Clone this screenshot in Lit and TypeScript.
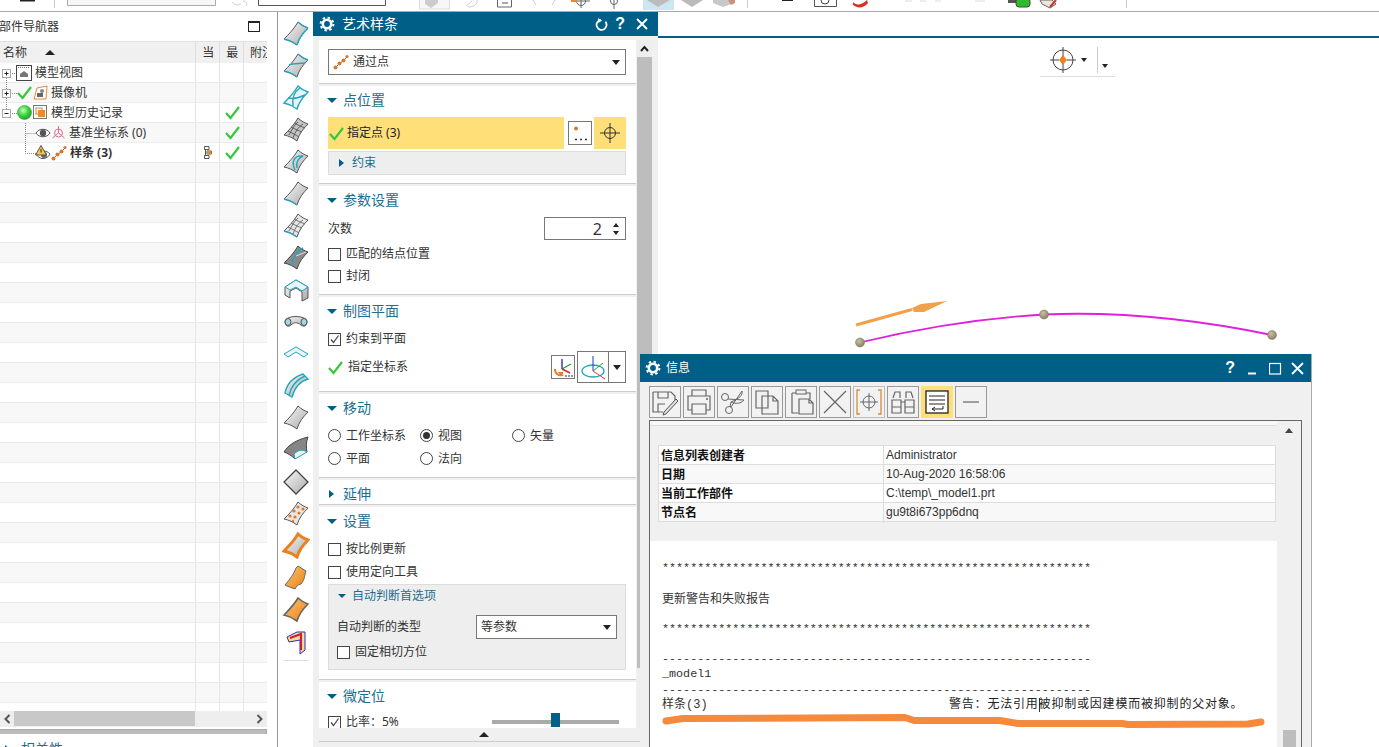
import { LitElement, html, css, svg } from 'lit';
import { customElement } from 'lit/decorators.js';

const PATCH = 'M2 20C7 15 12 10 16 3C19 6 23 8 26 9C21 14 17 19 15 26C11 23 7 21 2 20Z';
const TOP = 'M16 3C19 6 23 8 26 9';
const RIGHT = 'M26 9C21 14 17 19 15 26';
const BOTTOM = 'M15 26C11 23 7 21 2 20';
const GRID = 'M6 16C10 18 14 20 17 22M9 12C13 14 17 16 20 17M12 8C16 10 20 12 23 13M7 20C10 15 12 10 16 7M11 23C13 17 16 12 21 9';

const base = (fill = 'url(#gy)', stroke = '#555', width = 1) =>
  svg`<path d=${PATCH} fill=${fill} stroke=${stroke} stroke-width=${width} />`;
const cyan = (d: string) => svg`<path d=${d} fill="none" stroke="#22a5bd" stroke-width="1.4" />`;

// vertical strip beside the navigator, top to bottom
const stripIcons = [
  svg`${base()}${cyan(TOP)}${cyan(RIGHT)}${cyan(BOTTOM)}`,
  svg`${base()}${cyan(TOP)}${cyan(BOTTOM)}${cyan('M7 14C12 12 18 13 23 12')}`,
  svg`${base('#e6f5f8', '#22a5bd', 1.4)}${cyan('M6 15C11 16 17 15 23 12M11 23C10 16 12 9 18 5')}`,
  svg`${base('#c4c4c4', '#555')}<path d=${GRID} fill="none" stroke="#555" stroke-width=".9" />`,
  svg`${base()}${cyan('M13 23C9 15 12 8 21 9C16 11 14 15 15 21')}`,
  svg`${base()}${cyan(BOTTOM)}`,
  svg`${base('#e6e6e6', '#555')}<path d=${GRID} fill="none" stroke="#666" stroke-width=".9" />${cyan(BOTTOM)}`,
  svg`${base('#8a8a8a', '#444')}<path d="M9 23C11 15 15 8 21 5" stroke="#22a5bd" stroke-width="1.4" fill="none" /><path d="M14 13L24 9" stroke="#ddd" />`,
  svg`<path d="M3 12L14 5L26 12V23L20 26V17L14 13L8 16V23L3 20Z" fill="url(#gy)" stroke="#555" /><path d="M3 12L14 5L26 12L20 16L14 12L8 15Z" fill="#e8f6f9" stroke="#22a5bd" />`,
  svg`<path d="M3 14C4 8 24 8 25 14C25 20 21 20 19 18C15 15 12 15 9 18C7 20 3 20 3 14Z" fill="url(#gy)" stroke="#555" /><ellipse cx="6" cy="15" rx="3" ry="3.5" fill="#a8d4de" stroke="#555" /><ellipse cx="22" cy="15" rx="3" ry="3.5" fill="#a8d4de" stroke="#555" />`,
  svg`<path d="M2 15L14 8L26 15L22 18L14 13L6 18Z" fill="#e8f6f9" stroke="#22a5bd" />`,
  svg`<path d="M3 22C5 12 12 6 21 3L26 8C18 10 13 16 10 26Z" fill="url(#gy)" stroke="#22a5bd" stroke-width="1.4" />${cyan('M7 24C9 15 14 9 23 5')}`,
  svg`${base()}`,
  svg`<path d="M2 17C6 10 14 5 26 2C24 7 24 12 25 17C19 16 15 19 13 24C9 20 5 18 2 17Z" fill="#858585" stroke="#444" /><path d="M12 19C16 15 20 14 25 17L13 24Z" fill="#eee" stroke="#22a5bd" />`,
  svg`<path d="M14 3L26 15L14 27L2 15Z" fill="url(#gy)" stroke="#444" stroke-width="1.3" />`,
  svg`${base('#e6e6e6')}<g fill="#df7a2a"><circle cx="16" cy="8" r="1.6" /><circle cx="21" cy="10" r="1.6" /><circle cx="12" cy="12" r="1.6" /><circle cx="17" cy="14" r="1.6" /><circle cx="8" cy="17" r="1.6" /><circle cx="13" cy="18" r="1.6" /><circle cx="11" cy="22" r="1.2" /></g>`,
  svg`<path d=${PATCH} fill="url(#gy)" stroke="#e8811f" stroke-width="3" />`,
  svg`<path d="M3 22C8 16 12 11 14 5L16 3L24 8C22 14 23 16 19 21C16 21 14 24 13 26L5 23Z" fill="url(#or)" stroke="#666" />`,
  svg`${base('url(#or)', '#666', 1.6)}`,
  svg`<path d="M5 10L15 5H23V23L18 27V13L7 15Z" fill="#ffd79b" stroke="#2b2bc0" /><path d="M8 11L19 7V23" fill="none" stroke="#c81e3c" stroke-width="2" />`,
];

// info window toolbar
const toolIcons = [
  svg`<path d="M4 6H22L26 10V14M4 6V26H14M9 6V12H19V6M9 26V18H16" fill="none" stroke="#666" stroke-width="1.2" /><path d="M15 26L27 13L29 15L17 28L14 29Z" fill="#ddd" stroke="#555" />`,
  svg`<path d="M9 10V4H23V10M9 24H5V10H27V24H23M9 18H23V28H9Z" fill="none" stroke="#666" stroke-width="1.2" /><circle cx="24" cy="13" r="1" fill="#666" />`,
  svg`<circle cx="8" cy="11" r="3.5" fill="none" stroke="#666" /><circle cx="12" cy="24" r="3.5" fill="none" stroke="#666" /><path d="M11 13L27 14C24 18 18 18 14 16L13 21M14 21L25 5C26 9 22 13 14 16" fill="none" stroke="#666" />`,
  svg`<path d="M5 5H17V22H5ZM11 10H22L27 15V28H11ZM22 10V15H27" fill="#f0f0f0" stroke="#666" stroke-width="1.2" />`,
  svg`<path d="M7 7H25V13M7 7V27H13" fill="none" stroke="#666" stroke-width="1.2" /><rect x="11" y="4" width="10" height="4" fill="#f0f0f0" stroke="#666" /><path d="M14 13H24L28 17V28H14ZM24 13V17H28" fill="#f0f0f0" stroke="#666" stroke-width="1.2" />`,
  svg`<path d="M5 5L27 27M27 5L5 27" stroke="#666" stroke-width="1.2" />`,
  svg`<path d="M7 4H4V28H7M25 4H28V28H25" fill="none" stroke="#d98a3a" stroke-width="1.3" /><circle cx="16" cy="16" r="6" fill="none" stroke="#666" /><path d="M16 7V25M7 16H25" stroke="#666" />`,
  svg`<path d="M6 12L8 6H13V12M19 12V6H24L26 12M5 14H14V27H5ZM18 14H27V27H18ZM14 16H18M5 21H14M18 21H27" fill="none" stroke="#666" stroke-width="1.2" />`,
  svg`<rect x="5" y="5" width="22" height="22" fill="#fff" stroke="#222" stroke-width="1.3" /><path d="M8 10H24M8 14H24M8 18H24M12 23H22V20" fill="none" stroke="#222" /><path d="M14 21L11 23L14 25" fill="none" stroke="#222" />`,
  svg`<path d="M8 16H24" stroke="#666" stroke-width="1.2" />`,
];

const check = (w = 15) => html`<svg class="ic" width=${w} height=${w} viewBox="0 0 15 15"><path d="M1 8L5.5 13L14 2" fill="none" stroke="#37c83f" stroke-width="2.2" /></svg>`;
const gear = html`<svg class="ic" width="16" height="16" viewBox="0 0 16 16"><circle cx="8" cy="8" r="4.2" fill="none" stroke="#fff" stroke-width="2.6" /><circle cx="8" cy="8" r="6.4" fill="none" stroke="#fff" stroke-width="2" stroke-dasharray="2.4 2.6" /></svg>`;
const splineIcon = html`<svg class="ic" width="16" height="16" viewBox="0 0 16 16"><path d="M2 14L6 10L10 7L15 2" stroke="#8a6a4a" fill="none" /><g fill="#d9782d"><circle cx="2.5" cy="13.5" r="2" /><circle cx="6.5" cy="9.5" r="2" /><circle cx="10.5" cy="6.5" r="2" /><circle cx="14" cy="2.5" r="1.6" /></g></svg>`;
const eye = html`<svg class="ic" width="16" height="12" viewBox="0 0 16 12"><path d="M1 6C4 1 12 1 15 6C12 11 4 11 1 6Z" fill="#fff" stroke="#555" /><circle cx="8" cy="6" r="3.2" fill="#555" /></svg>`;

const treeRows = [
  {
    pad: 16, label: '模型视图', gap: 3,
    icons: html`<svg class="ic" width="16" height="16" viewBox="0 0 16 16"><rect x=".5" y=".5" width="15" height="15" fill="#fff" stroke="#444" /><path d="M2 2.5H14" stroke="#777" stroke-dasharray="1 1" /><path d="M4 9L8 6L12 9V12H4Z" fill="#777" /></svg>`,
  },
  {
    pad: 17, label: '摄像机', gap: 3,
    icons: html`${check()}<svg class="ic" width="15" height="15" viewBox="0 0 15 15" style="margin-left:1px"><path d="M1 14L4 3L14 1L13 14Z" fill="#fff" stroke="#e08a3c" /><path d="M4 8H10V12H4Z" fill="#666" /><circle cx="9" cy="6" r="2" fill="#888" /></svg>`,
  },
  {
    pad: 17, label: '模型历史记录', gap: 3,
    icons: html`<svg class="ic" width="15" height="15" viewBox="0 0 15 15"><circle cx="7.5" cy="7.5" r="7" fill="url(#ball)" stroke="#3a9a3a" stroke-width=".6" /></svg><svg class="ic" width="15" height="15" viewBox="0 0 15 15" style="margin-left:1px"><rect x=".5" y=".5" width="13" height="13" fill="#fff" stroke="#777" /><rect x="3" y="3" width="6" height="6" fill="#fff" stroke="#c98a4a" /><rect x="5" y="5" width="7" height="7" fill="#ee8a2c" /></svg>`,
  },
  {
    pad: 35, label: '基准坐标系 (0)', gap: 3,
    icons: html`${eye}<svg class="ic" width="15" height="15" viewBox="0 0 15 15"><circle cx="7.5" cy="8" r="4" fill="none" stroke="#d9708a" /><path d="M7.5 1V8M7.5 8L1.5 13M7.5 8L13.5 13" stroke="#d9708a" fill="none" /></svg>`,
  },
  {
    pad: 35, label: '样条 (3)', gap: 3, bold: true, tag: true,
    icons: html`<svg class="ic" width="16" height="16" viewBox="0 0 16 16"><path d="M1 9C4 5 12 5 15 9C12 15 4 15 1 9Z" fill="#fff" stroke="#555" /><circle cx="9" cy="10" r="3" fill="#666" /><path d="M6 0.5L11.5 10H0.5Z" fill="#f6c640" stroke="#555" /><path d="M6 4V7.5" stroke="#333" /></svg>${splineIcon}`,
  },
];

const logLines = [
  '*************************************************************',
  ' ',
  '@更新警告和失败报告',
  ' ',
  '*************************************************************',
  ' ',
  '-------------------------------------------------------------',
  '_model1',
  '-------------------------------------------------------------',
];

const infoRows = [
  ['信息列表创建者', 'Administrator'],
  ['日期', '10-Aug-2020 16:58:06'],
  ['当前工作部件', 'C:\\temp\\_model1.prt'],
  ['节点名', 'gu9t8i673pp6dnq'],
];

@customElement('app-root')
export class AppRoot extends LitElement {
  static styles = css`
    :host {
      display: block;
      position: relative;
      width: 1379px;
      height: 747px;
      overflow: hidden;
      background: #fff;
      color: #333;
      font: 12px/16px "Noto Sans", "Noto Sans CJK SC", sans-serif;
    }
    .ic { display: block; flex: none; }
    .defs { position: absolute; width: 0; height: 0; }

    .topbar { display: block; height: 11px; border-bottom: 1px solid #aaa; }
    .main { display: flex; height: 735px; }

    /* navigator */
    .nav { width: 277px; flex: none; border-right: 1px solid #999; overflow: hidden; }
    .nav-title { display: flex; align-items: center; justify-content: space-between; height: 29px; width: 261px; margin-left: -1px; }
    .nav-max { width: 10px; height: 8px; border: 1px solid #222; border-top-width: 2px; }
    .nav-table { width: 267px; }
    .thead { display: flex; height: 22px; background: #f0f0f0; border-top: 1px solid #e2e2e2; box-sizing: border-box; align-items: center; }
    .thead .name { width: 196px; padding-left: 3px; box-sizing: border-box; display: flex; align-items: center; gap: 18px; }
    .sort { width: 0; height: 0; border: 5px solid transparent; border-top: 0; border-bottom: 5px solid #222; }
    .thead .col { width: 24px; height: 100%; border-left: 1px solid #ddd; box-sizing: border-box; padding: 3px 0 0 6px; overflow: hidden; white-space: nowrap; }
    .tbody { position: relative; height: 648px; overflow: hidden; }
    .tr { display: flex; height: 20px; box-sizing: border-box; border-bottom: 1px solid #ececec; }
    .tr:nth-child(even) { background: #f8f8f8; }
    .tr .name { width: 196px; display: flex; align-items: center; box-sizing: border-box; white-space: nowrap; }
    .tr .col { width: 24px; box-sizing: border-box; border-left: 1px solid #e6e6e6; padding-left: 1px; display: flex; align-items: center; justify-content: center; }
    .tr b { font-weight: 700; }
    .tree-lines { position: absolute; left: 0; top: 0; }
    .hbar { display: flex; align-items: center; justify-content: space-between; height: 16px; background: #eee; padding: 0 4px; position: relative; }
    .hthumb { position: absolute; left: 14px; width: 181px; top: 0; height: 15px; background: #c8c8c8; }
    .hbar-left { position: relative; }
    .grip { height: 4px; margin-top: 2px; background: #bbb; border: 1px solid #aaa; border-width: 1px 1px 0 0; }
    .foot { display: flex; align-items: center; gap: 11px; padding: 7px 0 0 5px; color: #1d6f8f; font-size: 14px; }

    .tri-r { width: 0; height: 0; border: 4px solid transparent; border-right: 0; border-left: 5px solid #005f87; flex: none; }
    .tri-d { width: 0; height: 0; border: 4px solid transparent; border-bottom: 0; border-top: 5px solid #222; flex: none; }

    /* feature strip */
    .strip { width: 35px; flex: none; padding-top: 5px; box-sizing: border-box; display: flex; flex-direction: column; align-items: center; }
    .strip-item { height: 32px; display: flex; align-items: center; justify-content: center; }
    .strip hr { width: 26px; margin: 3px 0 0; border: 0; border-top: 1px solid #ddd; }

    /* dialog */
    .dialog { width: 345px; flex: none; display: flex; flex-direction: column; background: #f0f0f0; }
    .title { display: flex; align-items: center; background: #005f87; color: #fff; flex: none; }
    .dialog .title { height: 24px; padding: 0 9px 0 6px; font-size: 14px; gap: 7px; }
    .title .grow { flex: 1; }
    .title .q { font: 700 16px/16px "Liberation Sans", sans-serif; }
    .dlg-mid { display: flex; height: 688px; margin-top: 4px; padding-left: 6px; }
    .dlg-body { width: 317px; height: 688px; overflow: hidden; background: #fff; }
    .dlg-scroll { width: 15px; margin-left: 1px; display: flex; flex-direction: column; background: #eee; }
    .dlg-scroll .up { height: 17px; display: flex; align-items: center; justify-content: center; }
    .dlg-scroll .thumb { height: 611px; background: #bdbdbd; }
    .sec { padding: 0 10px 8px 9px; border-bottom: 1px solid #ccc; box-shadow: 0 2px 0 #f0f0f0; margin-bottom: 2px; }
    .sec-first { padding-top: 9px; }
    .head { display: flex; align-items: center; gap: 6px; height: 28px; margin-bottom: 3px; color: #1d6f8f; font-size: 14px; }
    .head .tri-d { border-top-color: #005f87; border-width: 5px 5px 0; margin-left: -1px; }
    .head .tri-r { margin-left: 1px; margin-right: 3px; }
    .closed { padding-bottom: 0; }
    .closed .head { margin-bottom: -4px; }

    .select { display: flex; align-items: center; height: 26px; box-sizing: border-box; border: 1px solid #777; background: #fff; padding: 0 5px 0 4px; gap: 4px; }
    .select .grow { flex: 1; }
    .pick { display: flex; align-items: center; gap: 4px; height: 32px; }
    .pick-main { width: 236px; height: 32px; background: #fedf78; display: flex; align-items: center; gap: 3px; padding-left: 1px; box-sizing: border-box; color: #222; }
    .pick-btn { width: 24px; height: 24px; box-sizing: border-box; border: 1px solid #777; background: #fff; }
    .pick-cross { width: 32px; height: 32px; background: #fedf78; margin-left: -2px; display: flex; align-items: center; justify-content: center; }
    .sub { display: flex; align-items: center; gap: 8px; height: 24px; margin-top: 2px; padding-left: 10px; box-sizing: border-box; background: #eee; border: 1px solid #ddd; color: #1d6f8f; }
    .row { display: flex; align-items: center; height: 22px; gap: 5px; }
    .box { width: 13px; height: 13px; box-sizing: border-box; border: 1px solid #444; background: #fff; flex: none; }
    .box svg { display: block; }
    .spin-row { display: flex; justify-content: space-between; align-items: center; height: 23px; margin-bottom: 3px; }
    .sec-params { padding-bottom: 7px; }
    .spin { width: 82px; height: 23px; box-sizing: border-box; border: 1px solid #777; display: flex; align-items: center; justify-content: flex-end; padding-right: 6px; gap: 11px; font: 16px/20px "Noto Sans", sans-serif; }
    .spin-arrows { display: flex; flex-direction: column; gap: 4px; }
    .tri-u-s { width: 0; height: 0; border: 3px solid transparent; border-top: 0; border-bottom: 4px solid #222; }
    .tri-d-s { width: 0; height: 0; border: 3px solid transparent; border-bottom: 0; border-top: 4px solid #222; }
    .csys { display: flex; align-items: center; height: 32px; margin-top: 1px; gap: 5px; }
    .csys .grow { flex: 1; }
    .csys-a { width: 24px; height: 24px; box-sizing: border-box; border: 1px solid #777; margin-right: -3px; }
    .csys-b { width: 49px; height: 32px; box-sizing: border-box; border: 1px solid #777; display: flex; align-items: center; }
    .csys-b .arrow { width: 17px; height: 100%; border-left: 1px solid #777; display: flex; align-items: center; justify-content: center; }
    .sec-move { padding-bottom: 7px; }
    .radios { display: grid; grid-template-columns: 92px 92px 92px; grid-auto-rows: 23px; margin-top: -1px; }
    .radio { display: flex; align-items: center; gap: 5px; }
    .dot { width: 13px; height: 13px; box-sizing: border-box; border: 1px solid #444; border-radius: 50%; display: flex; align-items: center; justify-content: center; }
    .dot i { width: 7px; height: 7px; border-radius: 50%; background: #333; }
    .sec-settings { padding-bottom: 9px; }
    .stack { display: flex; flex-direction: column; gap: 1px; }
    .group { margin-top: 1px; height: 86px; box-sizing: border-box; background: #eee; border: 1px solid #ddd; padding: 2px 8px 0 8px; }
    .group-head { display: flex; align-items: center; gap: 6px; height: 18px; color: #1d6f8f; margin-bottom: 10px; }
    .group-head .tri-d { border-top-color: #005f87; border-width: 4px 4px 0; margin-left: 1px; }
    .group-row { display: flex; align-items: center; justify-content: space-between; height: 24px; margin-bottom: 2px; }
    .group-row .select { width: 141px; height: 24px; }
    .slider-row { display: flex; align-items: center; height: 22px; position: relative; margin-top: -2px; }
    .slider { position: absolute; left: 164px; top: 9px; width: 127px; height: 4px; background: #aaa; }
    .slider i { position: absolute; left: 59px; top: -7px; width: 9px; height: 14px; background: #005f87; }
    .dlg-foot { height: 13px; flex: none; display: flex; align-items: center; justify-content: center; padding-right: 4px; }
    .dlg-foot i { width: 0; height: 0; border: 5px solid transparent; border-top: 0; border-bottom: 5px solid #222; }
    .dlg-line { border-top: 1px solid #ccc; margin-left: 6px; width: 332px; }

    /* graphics window */
    .view { flex: 1; position: relative; }
    .view svg { position: absolute; left: 0; top: 0; }

    /* info window */
    .info { position: absolute; left: 640px; top: 354px; width: 672px; height: 393px; background: #f0f0f0; border-right: 1px solid #aaa; box-sizing: border-box; display: flex; flex-direction: column; }
    .info .title { height: 28px; padding: 0 7px 0 5px; gap: 5px; }
    .win-btns { display: flex; align-items: center; gap: 9px; }
    .tools { display: flex; gap: 2px; height: 34px; padding: 4px 0 0 9px; flex: none; }
    .tool { width: 32px; height: 32px; box-sizing: border-box; border: 1px solid #999; background: #f2f2f2; }
    .tool svg { margin: -1px; }
    .tool.amber { background: #fedf78; border-color: #fedf78; }
    .tool.on { border-color: #bbb; }
    .pane { flex: 1; min-height: 0; margin: 0 9px 0 9px; border: 1px solid #666; border-bottom: 0; display: flex; }
    .pane-main { width: 627px; display: flex; flex-direction: column; }
    .band { height: 4px; flex: none; background: #f8f8f8; border-bottom: 1px solid #ddd; }
    .sum { background: #f0f0f0; height: 115px; flex: none; padding: 19px 1px 0 8px; box-sizing: border-box; }
    .sum-row { display: grid; grid-template-columns: 225px 1fr; height: 19px; box-sizing: border-box; background: #fff; border: 1px solid #ddd; border-top: 0; line-height: 18px; }
    .sum-row:first-child { border-top: 1px solid #ddd; height: 20px; }
    .sum-row:nth-child(even) { background: #f8f8f8; }
    .sum-row b { font-weight: 700; color: #111; padding-left: 2px; border-right: 1px solid #ddd; line-height: 20px; }
    .sum-row span { font-family: "Liberation Sans", sans-serif; color: #333; padding-left: 2px; }
    .log { flex: 1; background: #fff; padding: 20px 0 0 12px; position: relative; font: 11.72px/15.2px "Liberation Mono", "Noto Sans CJK SC", monospace; color: #333; overflow: hidden; }
    .log > div { white-space: pre; height: 15.2px; }
    .log-cjk { font-size: 12px; line-height: 18px; }
    .log-row { display: flex; }
    .log-row .obj { width: 287px; font-size: 12px; }
    .log-row .warn { font-size: 12px; letter-spacing: .8px; color: #222; }
    .caret { display: inline-block; width: 0; height: 14px; border-left: 1px solid #333; vertical-align: middle; margin-right: -1px; }
    .mark { position: absolute; left: 0; top: 0; }
    .pane-bar { flex: 1; display: flex; flex-direction: column; align-items: center; background: #f0f0f0; padding-top: 7px; }
    .pane-bar .up { width: 0; height: 0; border: 4px solid transparent; border-top: 0; border-bottom: 5px solid #444; }
    .pane-bar .thumb { width: 13px; height: 17px; margin-top: auto; background: #bdbdbd; }
  `;

  private renderTopbar() {
    return html`<svg class="topbar" width="1379" height="12" viewBox="0 0 1379 11">
      <path d="M20 0H35V1.5H20Z" fill="#222" />
      <path d="M54.5 0V8M747.5 0V8M1126.5 0V8" stroke="#ccc" />
      <path d="M67.5 0V5.5H215.5V0" fill="#f6f6f6" stroke="#aaa" />
      <path d="M232 2C235 6 239 5 241 4M243 1C246 1 248 4 246 6" fill="none" stroke="#ccc" />
      <path d="M258.5 0V5.5H385.5V0" fill="#fff" stroke="#555" />
      <rect x="419.5" y="-2" width="30" height="11" fill="#f7f7f7" stroke="#ddd" />
      <path d="M425 0H438V3L431 8L425 4Z" fill="#ccc" />
      <path d="M466 6L472 1M468 7C474 7 478 4 477 0" fill="none" stroke="#ccc" />
      <path d="M497.5 0V7H511.5V0" fill="#fff" stroke="#666" /><path d="M502 3H508" stroke="#555" />
      <path d="M533 0L536 5M555 0L552 5" stroke="#ccc" />
      <circle cx="581" cy="1" r="4.5" fill="none" stroke="#666" /><path d="M581 0V8M573 1H590" stroke="#666" /><path d="M571 0H577V2H571Z" fill="#e08a3c" />
      <path d="M614 0V9" stroke="#666" /><circle cx="614" cy="1" r="3.5" fill="none" stroke="#666" />
      <rect x="643" y="-1" width="31" height="11" fill="#cde6ef" />
      <path d="M647 0L658 7L670 0Z" fill="#bbb" />
      <path d="M681 0L692 7L703 0Z" fill="#bbb" />
      <path d="M713 0V3L723 7L734 3V0Z" fill="#c8c8c8" /><path d="M728 0H735V3L731 5Z" fill="#c9907a" />
      <path d="M782 0H793V1H782Z" fill="#222" />
      <path d="M814.5 0V6.5H836.5V0" fill="#fff" stroke="#555" /><circle cx="825" cy="0" r="4" fill="none" stroke="#444" />
      <path d="M853 2C856 6 862 5 867 0L868 3C864 8 858 9 853 5Z" fill="#d8301c" />
      <path d="M905 1H912M920 1H926M935 1H941M975 1H985" stroke="#ddd" />
      <rect x="1008" y="-3" width="10" height="6" fill="#555" /><rect x="1016" y="-2" width="14" height="9" rx="3" fill="#2ebc2e" stroke="#444" />
      <path d="M1040 0H1052L1056 4L1050 8L1042 4Z" fill="#f0e4d8" stroke="#666" /><path d="M1056 0L1050 7" stroke="#c0392b" stroke-width="2" />
    </svg>`;
  }

  private renderNav() {
    const rows = Array.from({ length: 33 }, (_, i) => treeRows[i]);
    return html`<div class="nav">
      <div class="nav-title"><span>部件导航器</span><i class="nav-max"></i></div>
      <div class="nav-table">
        <div class="thead">
          <div class="name"><span>名称</span><i class="sort"></i></div>
          <div class="col">当</div><div class="col">最</div><div class="col">附注</div>
        </div>
        <div class="tbody">
          ${rows.map((r, i) => html`<div class="tr">
            <div class="name" style="padding-left:${r ? r.pad : 0}px">
              ${r ? html`${r.icons}<span style="margin-left:${r.gap}px">${r.bold ? html`<b>${r.label}</b>` : r.label}</span>` : ''}
            </div>
            <div class="col">${r?.tag ? html`<svg class="ic" width="8" height="13" viewBox="0 0 8 13"><path d="M.5.5H5V3.5H.5ZM3 5H7.5V8H3ZM.5 9.5H5V12.5H.5ZM1.5 3.5V9.5" fill="none" stroke="#555" /><rect x="3" y="5" width="4.5" height="3" fill="#e08a3c" /></svg>` : ''}</div>
            <div class="col">${i >= 2 && r ? check(15) : ''}</div>
            <div class="col"></div>
          </div>`)}
          <svg class="tree-lines" width="60" height="100">
            <path d="M6.5 15V50M10 10.5H16M10 30.5H17M10 50.5H17M25.5 60V90.5H36M25.5 70.5H36" fill="none" stroke="#888" stroke-dasharray="1 1" />
            <g fill="#fff" stroke="#aaa"><rect x="2.5" y="6.5" width="8" height="8" /><rect x="2.5" y="26.5" width="8" height="8" /><rect x="2.5" y="46.5" width="8" height="8" /></g>
            <path d="M4.5 10.5H8.5M6.5 8.5V12.5M4.5 30.5H8.5M6.5 28.5V32.5M4.5 50.5H8.5" stroke="#222" />
          </svg>
        </div>
        <div class="hbar">
          <i class="hthumb"></i>
          <svg class="ic hbar-left" width="7" height="10" viewBox="0 0 7 10"><path d="M5.5 1L1.5 5L5.5 9" fill="none" stroke="#555" stroke-width="2" /></svg>
          <svg class="ic" width="7" height="10" viewBox="0 0 7 10"><path d="M1.5 1L5.5 5L1.5 9" fill="none" stroke="#555" stroke-width="2" /></svg>
        </div>
        <div class="grip"></div>
      </div>
      <div class="foot"><i class="tri-r"></i><span>相关性</span></div>
    </div>`;
  }

  private renderStrip() {
    return html`<div class="strip">
      ${stripIcons.map(
        (icon) => html`<div class="strip-item"><svg class="ic" width="28" height="28" viewBox="0 0 28 28">${icon}</svg></div>`,
      )}
      <hr />
    </div>`;
  }

  private renderBox(on = false) {
    return html`<span class="box">${on ? html`<svg width="11" height="11" viewBox="0 0 11 11"><path d="M2 5.5L4.5 8.5L9.5 1.5" fill="none" stroke="#444" stroke-width="1.2" /></svg>` : ''}</span>`;
  }

  private renderRadio(label: string, on = false) {
    return html`<div class="radio"><span class="dot">${on ? html`<i></i>` : ''}</span>${label}</div>`;
  }

  private renderDialog() {
    return html`<div class="dialog">
      <div class="title">
        ${gear}<span>艺术样条</span><span class="grow"></span>
        <svg class="ic" width="13" height="13" viewBox="0 0 13 13"><path d="M4 2.5A5 5 0 1 0 9 2.5" fill="none" stroke="#fff" stroke-width="1.8" transform="rotate(20 6.5 7)" /><path d="M3 0L7 2.5L3.5 5Z" fill="#fff" /></svg>
        <span class="q">?</span>
        <svg class="ic" width="14" height="14" viewBox="0 0 14 14" style="margin-left:3px"><path d="M2 2L12 12M12 2L2 12" stroke="#fff" stroke-width="2" /></svg>
      </div>
      <div class="dlg-mid">
        <div class="dlg-body">
          <div class="sec sec-first">
            <div class="select">${splineIcon}<span>通过点</span><span class="grow"></span><i class="tri-d"></i></div>
          </div>
          <div class="sec">
            <div class="head"><i class="tri-d"></i>点位置</div>
            <div class="pick">
              <div class="pick-main">${check()}<span>指定点 (3)</span></div>
              <div class="pick-btn"><svg class="ic" width="22" height="22" viewBox="0 0 22 22"><circle cx="7" cy="6.5" r="2" fill="#d9782d" /><path d="M6 17.5H8M11 17.5H13M16 17.5H18" stroke="#333" stroke-width="1.5" /></svg></div>
              <div class="pick-cross"><svg class="ic" width="22" height="22" viewBox="0 0 22 22"><circle cx="11" cy="11" r="5.5" fill="none" stroke="#333" /><path d="M11 1V21M1 11H21" stroke="#333" /></svg></div>
            </div>
            <div class="sub"><i class="tri-r"></i>约束</div>
          </div>
          <div class="sec sec-params">
            <div class="head"><i class="tri-d"></i>参数设置</div>
            <div class="spin-row"><span>次数</span>
              <div class="spin"><span>2</span><div class="spin-arrows"><i class="tri-u-s"></i><i class="tri-d-s"></i></div></div>
            </div>
            <div class="row">${this.renderBox()}匹配的结点位置</div>
            <div class="row">${this.renderBox()}封闭</div>
          </div>
          <div class="sec">
            <div class="head"><i class="tri-d"></i>制图平面</div>
            <div class="row">${this.renderBox(true)}约束到平面</div>
            <div class="csys">
              ${check()}<span>指定坐标系</span><span class="grow"></span>
              <div class="csys-a"><svg class="ic" width="22" height="22" viewBox="0 0 22 22"><path d="M10 13V3" stroke="#2233cc" stroke-width="1.4" /><path d="M10 13L19 8" stroke="#2aa52a" stroke-width="1.4" /><path d="M10 13L18 17" stroke="#d22" stroke-width="1.4" /><path d="M3 13C3 18 7 20 10 19L8 17L11 17" fill="none" stroke="#e8811f" stroke-width="2" /><path d="M13 20H15M16 20H18M19 20H21" stroke="#333" /></svg></div>
              <div class="csys-b">
                <svg class="ic" width="30" height="30" viewBox="0 0 30 30"><ellipse cx="15" cy="19" rx="11" ry="6" fill="none" stroke="#22a5bd" stroke-width="1.3" /><path d="M15 19V4" stroke="#2233cc" /><path d="M15 19L25 11" stroke="#2aa52a" /><path d="M15 19L27 27" stroke="#e03344" /></svg>
                <div class="arrow"><i class="tri-d"></i></div>
              </div>
            </div>
          </div>
          <div class="sec sec-move">
            <div class="head"><i class="tri-d"></i>移动</div>
            <div class="radios">
              ${this.renderRadio('工作坐标系')}${this.renderRadio('视图', true)}${this.renderRadio('矢量')}
              ${this.renderRadio('平面')}${this.renderRadio('法向')}
            </div>
          </div>
          <div class="sec closed"><div class="head"><i class="tri-r"></i>延伸</div></div>
          <div class="sec sec-settings">
            <div class="head"><i class="tri-d"></i>设置</div>
            <div class="stack">
              <div class="row">${this.renderBox()}按比例更新</div>
              <div class="row">${this.renderBox()}使用定向工具</div>
            </div>
            <div class="group">
              <div class="group-head"><i class="tri-d"></i>自动判断首选项</div>
              <div class="group-row"><span>自动判断的类型</span>
                <div class="select"><span>等参数</span><span class="grow"></span><i class="tri-d"></i></div>
              </div>
              <div class="row">${this.renderBox()}固定相切方位</div>
            </div>
          </div>
          <div class="sec">
            <div class="head"><i class="tri-d"></i>微定位</div>
            <div class="slider-row row">${this.renderBox(true)}比率：5%<div class="slider"><i></i></div></div>
          </div>
        </div>
        <div class="dlg-scroll">
          <div class="up"><svg class="ic" width="9" height="7" viewBox="0 0 9 7"><path d="M1 6L4.5 2L8 6" fill="none" stroke="#222" stroke-width="2" /></svg></div>
          <div class="thumb"></div>
        </div>
      </div>
      <div class="dlg-foot"><i></i></div>
      <div class="dlg-line"></div>
    </div>`;
  }

  private renderView() {
    return html`<div class="view">
      <svg width="721" height="735" viewBox="658 12 721 735">
        <path d="M658 37H1379" stroke="#005f87" stroke-width="2" />
        <circle cx="1063" cy="60" r="10" fill="none" stroke="#444" />
        <path d="M1063 47V56M1063 64V73M1050 60H1059M1067 60H1076" stroke="#444" />
        <path d="M1063 55L1067 60L1063 65L1059 60Z" fill="#e8811f" />
        <path d="M1081 58H1087L1084 62Z M1102 64H1108L1105 68Z" fill="#222" />
        <path d="M1097.5 47V73" stroke="#ccc" />
        <path d="M1040 76.5H1115" stroke="#ddd" />
        <path d="M856 325L912 309.5" stroke="#f2a04a" stroke-width="3" />
        <path d="M912 308L921 304L947 301L924 312L914 312Z" fill="#f2a04a" />
        <path d="M860 342.5C920 328 985 318 1044 314.5C1100 312 1180 316 1272 335" fill="none" stroke="#e020dc" stroke-width="1.8" />
        <g fill="url(#pt)" stroke="#7d7660" stroke-width=".5"><circle cx="860" cy="342.5" r="4.5" /><circle cx="1044" cy="314.5" r="4.5" /><circle cx="1272" cy="335" r="4.5" /></g>
      </svg>
    </div>`;
  }

  private renderInfo() {
    return html`<div class="info">
      <div class="title">
        ${gear}<span>信息</span><span class="grow"></span>
        <div class="win-btns">
          <span class="q">?</span>
          <svg class="ic" width="10" height="14" viewBox="0 0 10 14" style="margin-left:3px"><path d="M1 12.5H9" stroke="#fff" stroke-width="2" /></svg>
          <svg class="ic" width="13" height="13" viewBox="0 0 13 13" style="margin-left:3px"><rect x=".5" y="1.5" width="11" height="10.5" fill="none" stroke="#fff" stroke-width="1.2" /></svg>
          <svg class="ic" width="13" height="13" viewBox="0 0 13 13"><path d="M1 1L12 12M12 1L1 12" stroke="#fff" stroke-width="1.8" /></svg>
        </div>
      </div>
      <div class="tools">
        ${toolIcons.map((icon, i) => html`<div class="tool ${i === 8 ? 'amber' : ''} ${i === 6 ? 'on' : ''}"><svg class="ic" width="32" height="32" viewBox="0 0 32 32">${icon}</svg></div>`)}
      </div>
      <div class="pane">
        <div class="pane-main">
          <div class="band"></div>
          <div class="sum">
            ${infoRows.map(([k, v]) => html`<div class="sum-row"><b>${k}</b><span>${v}</span></div>`)}
          </div>
          <div class="log">
            ${logLines.map((l) => (l.startsWith('@') ? html`<div class="log-cjk">${l.slice(1)}</div>` : html`<div>${l}</div>`))}
            <div class="log-row"><span class="obj">样条(3)</span><span class="warn">警告：无法引用<i class="caret"></i>被抑制或因建模而被抑制的父对象。</span></div>
            <svg class="mark" width="627" height="206" viewBox="650 541 627 206">
              <path d="M666 721L683 718.5L905 717.5L914 720.5L1000 720.5L1018 723.5L1122 723.5L1128 724.5L1248 724L1261 722" fill="none" stroke="#f58a3c" stroke-width="7" stroke-linecap="round" stroke-linejoin="round" />
            </svg>
          </div>
        </div>
        <div class="pane-bar"><i class="up"></i><i class="thumb"></i></div>
      </div>
    </div>`;
  }

  render() {
    return html`
      <svg class="defs">
        <defs>
          <linearGradient id="gy" x1="0" y1="0" x2="1" y2="1"><stop offset="0" stop-color="#fafafa" /><stop offset="1" stop-color="#a9a9a9" /></linearGradient>
          <linearGradient id="or" x1="0" y1="0" x2="1" y2="1"><stop offset="0" stop-color="#ffc873" /><stop offset="1" stop-color="#ea7d12" /></linearGradient>
          <radialGradient id="ball" cx=".4" cy=".35" r=".7"><stop offset="0" stop-color="#c8ffc0" /><stop offset=".5" stop-color="#3fd83f" /><stop offset="1" stop-color="#1f9a2a" /></radialGradient>
          <radialGradient id="pt" cx=".4" cy=".35" r=".7"><stop offset="0" stop-color="#c9c2a4" /><stop offset="1" stop-color="#857c5c" /></radialGradient>
        </defs>
      </svg>
      ${this.renderTopbar()}
      <div class="main">
        ${this.renderNav()}${this.renderStrip()}${this.renderDialog()}${this.renderView()}
      </div>
      ${this.renderInfo()}
    `;
  }
}
